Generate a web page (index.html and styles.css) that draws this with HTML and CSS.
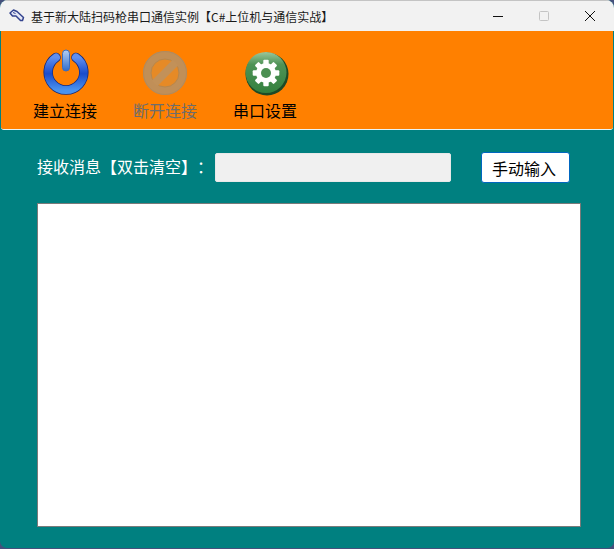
FILE: index.html
```html
<!DOCTYPE html>
<html lang="zh-CN">
<head>
<meta charset="utf-8">
<title>基于新大陆扫码枪串口通信实例</title>
<link rel="stylesheet" href="styles.css">
</head>
<body>
<div class="window">
  <header class="titlebar">
    <svg class="app-icon" width="16" height="16" viewBox="0 0 16 16"><path d="M1 5 L4.5 2 L8 3.5 L14.5 9.5 L13.5 12.5 L11.5 12.5 L7 8 L3.5 8 Z" fill="#e4e7f6" stroke="#34448f" stroke-width="1.5" stroke-linejoin="round"/><path d="M4 4.5 L6.5 5.5" stroke="#34448f" stroke-width="1"/></svg>
    <span class="title">基于新大陆扫码枪串口通信实例【C#上位机与通信实战】</span>
    <div class="controls">
      <span class="ctl"><svg width="10" height="10" viewBox="0 0 10 10"><path d="M0 5.5H10" stroke="#111" stroke-width="1"/></svg></span>
      <span class="ctl"><svg width="10" height="10" viewBox="0 0 10 10"><rect x=".5" y=".5" width="9" height="9" rx="1" fill="none" stroke="#c4c4c4"/></svg></span>
      <span class="ctl"><svg width="10" height="10" viewBox="0 0 10 10"><path d="M0 0L10 10M10 0L0 10" stroke="#111" stroke-width="1"/></svg></span>
    </div>
  </header>
  <nav class="toolbar">
    <div class="tool tool-a">
      <svg width="48" height="48" viewBox="1 0 48 48">
        <defs>
          <linearGradient id="b" x1="0" y1="0" x2="0" y2="1"><stop offset="0" stop-color="#5f8ff0"/><stop offset=".5" stop-color="#1b4ccb"/><stop offset="1" stop-color="#4a93ee"/></linearGradient>
          <linearGradient id="s" x1="0" y1="0" x2="0" y2="1"><stop offset="0" stop-color="#b4d0f4"/><stop offset="1" stop-color="#2f6ccc"/></linearGradient>
        </defs>
        <path d="M16 8.5 A17.8 17.8 0 1 0 36 8.5" fill="none" stroke="#14297a" stroke-width="9.5" stroke-linecap="round"/>
        <path d="M16 8.5 A17.8 17.8 0 1 0 36 8.5" fill="none" stroke="url(#b)" stroke-width="8" stroke-linecap="round"/>
        <rect x="22.5" y="1" width="7" height="21" rx="3.5" fill="url(#s)" stroke="#3a6cc0"/>
      </svg>
      <span>建立连接</span>
    </div>
    <div class="tool tool-b">
      <svg width="48" height="48" viewBox="1 0 48 48">
        <circle cx="25" cy="24" r="18" fill="#e68a26" stroke="#c08f58" stroke-width="8"/>
        <circle cx="25" cy="24" r="21.5" fill="none" stroke="#b08a5e" stroke-width="1"/>
        <circle cx="25" cy="24" r="14" fill="none" stroke="#b5874f" stroke-width="1"/>
        <path d="M14.5 34.5 L35.5 13.5" stroke="#c29159" stroke-width="8"/>
      </svg>
      <span class="off">断开连接</span>
    </div>
    <div class="tool tool-c">
      <svg width="48" height="48" viewBox="0 0 48 48">
        <defs><linearGradient id="g" x1="0" y1="0" x2="0" y2="1"><stop offset="0" stop-color="#9cc79c"/><stop offset=".3" stop-color="#4f9356"/><stop offset="1" stop-color="#33803e"/></linearGradient></defs>
        <circle cx="26" cy="25" r="21.5" fill="#1e4a26"/>
        <circle cx="25" cy="23.5" r="20.5" fill="url(#g)"/>
        <g fill="#fff" transform="translate(25 24)">
          <circle r="10"/>
          <rect x="-2.7" y="-13.3" width="5.4" height="26.6" rx="1"/>
          <rect x="-2.7" y="-13.3" width="5.4" height="26.6" rx="1" transform="rotate(45)"/>
          <rect x="-2.7" y="-13.3" width="5.4" height="26.6" rx="1" transform="rotate(90)"/>
          <rect x="-2.7" y="-13.3" width="5.4" height="26.6" rx="1" transform="rotate(135)"/>
          <circle r="5" fill="#4b8f52"/>
        </g>
      </svg>
      <span>串口设置</span>
    </div>
  </nav>
  <main class="content">
    <div class="row">
      <label class="label">接收消息【双击清空】：</label>
      <div class="field"></div>
      <button class="btn">手动输入</button>
    </div>
    <div class="log"></div>
  </main>
</div>
</body>
</html>
```
FILE: styles.css
```css
* { box-sizing: border-box; }
html, body { margin: 0; height: 100%; }
body {
  background: #45507c;
  font-family: "Noto Sans CJK SC", "Noto Sans", sans-serif;
  text-spacing-trim: space-all;
  overflow: hidden;
}
.window {
  width: 614px;
  height: 548px;
  background: #008080;
  border-radius: 8px 8px 7px 7px;
  overflow: hidden;
  display: flex;
  flex-direction: column;
}
.titlebar {
  height: 31px;
  flex: none;
  background: #f2f2f2;
  border-top: 1px solid #c4c4c4;
  display: flex;
  align-items: center;
  padding-left: 9px;
}
.app-icon { flex: none; }
.title {
  margin-left: 6px;
  font-size: 12px;
  color: #1a1a1a;
  white-space: nowrap;
}
.controls { margin-left: auto; margin-right: 1px; display: flex; align-self: flex-start; }
.ctl {
  width: 46px;
  height: 29px;
  display: flex;
  align-items: center;
  justify-content: center;
}
.toolbar {
  height: 99px;
  flex: none;
  margin: 0 1px;
  background: #ff8000;
  border-bottom: 1px solid #e8f4f4;
  border-radius: 0 0 3px 3px;
  display: flex;
  padding-top: 18px;
}
.tool {
  width: 64px;
  display: flex;
  flex-direction: column;
  align-items: center;
  font-size: 16px;
  line-height: 22px;
  color: #000;
  white-space: nowrap;
}
.tool svg { margin-bottom: 2px; }
.tool-a { margin-left: 32px; }
.tool-b { margin-left: 36px; }
.tool-c { margin-left: 36px; }
.off { color: #6d6d6d; }
.content { flex: 1; padding: 22px 33px 21px 37px; display: flex; flex-direction: column; }
.row { display: flex; align-items: center; height: 31px; }
.label { width: 178px; flex: none; margin-bottom: 3px; color: #fff; font-size: 16px; white-space: nowrap; }
.field {
  width: 236px;
  height: 29px;
  background: #f0f0f0;
  border: 1px solid #e8e8e8;
  border-radius: 2px;
}
.btn {
  margin-left: 30px;
  width: 89px;
  height: 31px;
  background: #fff;
  border: 1px solid #0067c0;
  border-radius: 3px;
  font: inherit;
  font-size: 16px;
  color: #000;
  padding: 0 3px 0 0;
}
.log {
  margin-top: 20px;
  width: 544px;
  height: 324px;
  background: #fff;
  border: 1px solid #7a7a7a;
}
```
